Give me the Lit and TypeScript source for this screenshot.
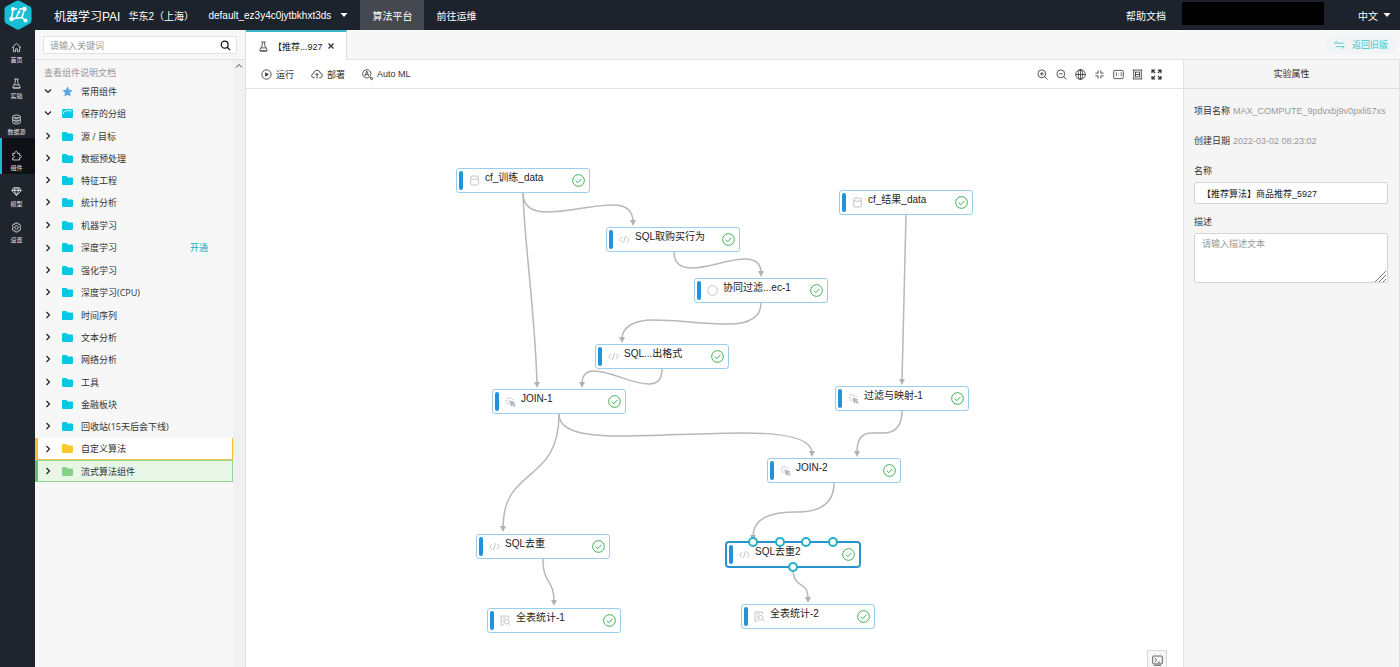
import { LitElement, html, svg, css, nothing } from "lit";
import { customElement, property, state } from "lit/decorators.js";
import { classMap } from "lit/directives/class-map.js";
import { styleMap } from "lit/directives/style-map.js";

/* Icon shapes, each drawn on a 16 x 16 grid with the current colour. */
const ICONS: Record<string, unknown> = {
  home: svg`<path d="M1.5 8.2 8 2l6.500 6.200M3.500 7v7h3.200v-4h2.600v4h3.200V7"/>`,
  flask: svg`<path d="M5 1.500h6M6.200 1.500v5L2.800 12.500q-.8 2 1.200 2h8q2 0 1.200-2L9.800 6.500v-5M4.500 10h7M3 14.500h10"/>`,
  data: svg`<ellipse cx="8" cy="3.500" rx="5.500" ry="2"/><path d="M2.500 3.500v9c0 2.600 11 2.600 11 0v-9M2.500 8c0 2.400 11 2.400 11 0M5 7h6M5 11.500h6"/>`,
  puzzle: svg`<path d="M2.500 5h3.200C5 1 10 1 9.300 5h3.200v3c3.600-.8 3.600 4 0 3.300v3.200h-10v-3.200c3 .5 3-4 0-3.300z"/>`,
  diamond: svg`<path d="M4 2.500h8l3 4-7 7.500-7-7.500zM1 6.500h14M5 6.500l3 7 3-7M4 2.500l1 4 3-4 3 4 1-4"/>`,
  gear: svg`<path d="M6.300 1.500h3.400l.6 1.800 1.900-.4 1.900 2.900-1 1.500v1.400l1 1.500-1.900 2.900-1.900-.4-.6 1.800H6.300l-.6-1.800-1.900.4-1.900-2.900 1-1.500V7.300l-1-1.500 1.900-2.900 1.900.4z"/><circle cx="8" cy="8" r="2.500"/>`,
  search: svg`<circle cx="6.800" cy="6.800" r="5"/><path d="m10.500 10.500 4.300 4.300"/>`,
  play: svg`<circle cx="8" cy="8" r="6.800"/><path d="M6 4.800v6.400L11.500 8z" fill="currentColor" stroke="none"/>`,
  cloud: svg`<path d="M5 13H4C0 13 0 7.500 3.700 7.300 4 1.800 11.500 1.800 12 6.500c4 .2 4 6.500 0 6.500h-1M8 14V7.500M5.800 9.500 8 7.300l2.200 2.200"/>`,
  automl: svg`<circle cx="7" cy="7" r="6"/><path d="M4 10.500 7 3l3 7.500M5.200 8.200h3.600M11.500 11.500l1.500 1.500"/><circle cx="14" cy="14" r="1.500"/>`,
  zoomin: svg`<circle cx="7" cy="7" r="5.700"/><path d="m11.200 11.200 4 4M4.200 7h5.600M7 4.200v5.600"/>`,
  zoomout: svg`<circle cx="7" cy="7" r="5.700"/><path d="m11.200 11.200 4 4M4.200 7h5.600"/>`,
  globe: svg`<circle cx="8" cy="8" r="7"/><ellipse cx="8" cy="8" rx="3.200" ry="7"/><path d="M1 8h14M8 1v14"/>`,
  shrink: svg`<path d="M6 2v4H2M10 2v4h4M6 14v-4H2M10 14v-4h4"/>`,
  ratio: svg`<rect x="1" y="2" width="14" height="12" rx="1.500"/><path d="M4 5.500h1v5M8 6.500v.800M8 9.200v.800M11 5.500h1v5" stroke-width="1"/>`,
  fit: svg`<path d="M1 1.500h14M1 14.500h14M2.500 1.500v13M13.500 1.500v13"/><rect x="5" y="4.500" width="6" height="7"/><path d="M5 8h6"/>`,
  full: svg`<path d="M1.500 6V1.500H6M1.500 1.500 6 6M10 1.500h4.500V6M14.500 1.500 10 6M1.500 10v4.500H6M1.500 14.500 6 10M10 14.500h4.500V10M14.500 14.500 10 10" stroke-width="1.800"/>`,
  swap: svg`<path d="M1 6h13M1 6l3-3M3 11h12l-3 3"/>`,
  right: svg`<path d="m5 2 6 6-6 6"/>`,
  down: svg`<path d="m2 5 6 6 6-6"/>`,
  up: svg`<path d="m2 11 6-6 6 6"/>`,
  close: svg`<path d="m3 3 10 10M13 3 3 13"/>`,
  caret: svg`<path d="M1 4h14l-7 8z" fill="currentColor" stroke="none"/>`,
  star: svg`<path d="m8 .5 2.300 4.900 5.200.7-3.800 3.700.9 5.400L8 12.600l-4.600 2.600.9-5.400L.5 6.100l5.200-.7z" fill="currentColor" stroke="none"/>`,
  folder: svg`<path d="M0 3.200q0-1.700 1.700-1.700h4.800l1.800 2h6q1.700 0 1.700 1.700v7.600q0 1.700-1.700 1.700H1.700Q0 14.500 0 12.800z" fill="currentColor" stroke="none"/>`,
  opened: svg`<path d="M0 3.200q0-1.700 1.700-1.700h12.600q1.700 0 1.700 1.700v9.600q0 1.700-1.700 1.700H1.700Q0 14.500 0 12.800z" fill="currentColor" stroke="none"/><path d="M2 9V5.500h2.500l1-1.500H14" stroke="#fff" stroke-width="1.200"/>`,
  table: svg`<path d="M2.500 3.500q0-2 2-2h7q2 0 2 2v9q0 2-2 2h-7q-2 0-2-2zM2.500 4.500q1.500 1.800 5.500 1.800t5.500-1.800"/>`,
  code: svg`<path d="M4.500 4 1 8l3.500 4M11.500 4 15 8l-3.500 4M9.500 3l-3 10"/>`,
  circle: svg`<circle cx="8" cy="8" r="7"/>`,
  spark: svg`<path d="M6 1v3M2.500 2.500l1.800 2M9.800 2.500 8.500 4.300M1 6.500h2.500M2 10.500l2-1.500M5.500 12v-2.500M11 5h2"/><path d="m7 7 7.500 2.800-2.500 1.400 3 3-1.300 1.300-3-3L9.300 15z" fill="currentColor"/>`,
  report: svg`<path d="M6 14.500H1.500v-13h11V5M4 4.500h5M4 7.500h2M4 10.500h1.500"/><circle cx="9.800" cy="9.800" r="3.300"/><path d="m12.300 12.300 3 3"/>`,
  check: svg`<circle cx="8" cy="8" r="7.200"/><path d="m4.600 8.200 2.500 2.500 4.500-4.700"/>`,
  terminal: svg`<rect x="1" y="1.500" width="14" height="11.500" rx="1"/><path d="m4 4.500 3 2.800-3 2.800M8.500 10.500H12M3 15h10"/>`,
};

const icon = (name: string, kind = "") =>
  html`<svg class="icon ${kind}" viewBox="0 0 16 16" aria-hidden="true">${ICONS[name]}</svg>`;

const iconStyles = css`
  .icon {
    display: block;
    flex: none;
    width: 11px;
    height: 11px;
    fill: none;
    stroke: currentColor;
    stroke-width: 1.2;
    overflow: visible;
  }
  .small { width: 8px; height: 8px; }
`;

interface TreeItem {
  label: string;
  icon?: string;
  open?: boolean;
  action?: string;
  tone?: string;
}

const TREE: TreeItem[][] = [
  [
    { label: "常用组件", icon: "star", open: true, tone: "favourite" },
    { label: "保存的分组", icon: "opened", open: true },
  ],
  [{ label: "源 / 目标" }, { label: "数据预处理" }, { label: "特征工程" }, { label: "统计分析" }],
  [
    { label: "机器学习" },
    { label: "深度学习", action: "开通" },
    { label: "强化学习" },
    { label: "深度学习(CPU)" },
  ],
  [{ label: "时间序列" }, { label: "文本分析" }, { label: "网络分析" }],
  [{ label: "工具" }, { label: "金融板块" }, { label: "回收站(15天后会下线)" }],
  [
    { label: "自定义算法", tone: "custom" },
    { label: "流式算法组件", tone: "stream" },
  ],
];

@customElement("component-tree")
class ComponentTree extends LitElement {
  static styles = [
    iconStyles,
    css`
      :host { display: flex; flex-direction: column; box-sizing: border-box; background: #f7f7f7; border-right: 1px solid #e0e0e0; }
      .search { display: flex; align-items: center; height: 18px; box-sizing: border-box; margin: 6px 8px 5px; border: 1px solid #e2e2e2; background: #fff; }
      .search input { flex: 1; min-width: 0; border: 0; outline: 0; padding: 0 6px; background: none; font: inherit; color: #333; }
      .search input::placeholder { color: #9a9a9a; opacity: 1; }
      .search button { display: flex; border: 0; padding: 0 5px; background: none; color: #111; }
      .search .icon { stroke-width: 1.8; }
      .body { flex: 1; display: flex; border-top: 1px solid #e2e2e2; }
      .list { flex: 1; min-width: 0; padding-top: 6px; }
      .doc { display: block; padding-left: 9px; line-height: 14px; color: #999; text-decoration: none; }
      .groups { display: flex; flex-direction: column; gap: 1px; }
      ul { list-style: none; margin: 0; padding: 0; }
      .row { display: flex; align-items: center; height: 22px; box-sizing: border-box; padding: 0 25px 0 9px; color: #333; }
      .row.extra { height: 23px; }
      .toggle { display: flex; align-items: center; flex: 1; border: 0; padding: 0; background: none; font: inherit; color: inherit; text-align: left; white-space: nowrap; }
      .toggle .small { color: #222; stroke-width: 2.4; margin-right: 10px; }
      .glyph { color: #06c8e4; margin-right: 8px; }
      .favourite .glyph { color: #58a9e6; }
      .custom { padding-left: 6px; border-left: 3px solid #f8c12c; border-right: 1px solid #f8c12c; border-bottom: 1px solid #f0c850; background: #fff; }
      .custom .glyph { color: #fbc62e; }
      .stream { padding-left: 6px; border: 1px solid #8fd48f; border-left: 3px solid #62c46a; background: #e8f6e6; }
      .stream .glyph { color: #85d287; }
      .more { color: #14b0c4; text-decoration: none; }
      .track { width: 12px; background: #f0f0f0; color: #444; }
      .track .icon { margin: 2px auto; stroke-width: 2; }
    `,
  ];

  @state() private keyword = "";

  private row(item: TreeItem) {
    const tone = item.tone ?? "";
    return html`<li class="row ${tone} ${item.action ? "extra" : ""}">
      <button class="toggle" aria-expanded=${item.open ? "true" : "false"}>
        ${icon(item.open ? "down" : "right", "small")} ${icon(item.icon ?? "folder", "glyph")}
        <span>${item.label}</span>
      </button>
      ${item.action ? html`<a class="more" href="#">${item.action}</a>` : nothing}
    </li>`;
  }

  render() {
    return html`
      <form class="search" role="search">
        <input type="text" aria-label="搜索组件" placeholder="请输入关键词" .value=${this.keyword}
          @input=${(e: Event) => (this.keyword = (e.target as HTMLInputElement).value)} />
        <button type="button" aria-label="搜索">${icon("search")}</button>
      </form>
      <div class="body">
        <div class="list">
          <a class="doc" href="#">查看组件说明文档</a>
          <div class="groups">
            ${TREE.map((group) => html`<ul>${group.map((item) => this.row(item))}</ul>`)}
          </div>
        </div>
        <div class="track">${icon("up", "small")}</div>
      </div>
    `;
  }
}

interface FlowNode {
  x: number;
  y: number;
  label: string;
  icon: string;
  selected?: boolean;
}

/* The graph keeps workspace coordinates; PAN is the workspace point at the canvas corner. */
const PAN = { x: 246, y: 89 };

const NODES: FlowNode[] = [
  { x: 456, y: 168, label: "cf_训练_data", icon: "table" },
  { x: 606, y: 227, label: "SQL取购买行为", icon: "code" },
  { x: 694, y: 278, label: "协同过滤...ec-1", icon: "circle" },
  { x: 595, y: 344, label: "SQL...出格式", icon: "code" },
  { x: 492, y: 389, label: "JOIN-1", icon: "spark" },
  { x: 839, y: 190, label: "cf_结果_data", icon: "table" },
  { x: 835, y: 386, label: "过滤与映射-1", icon: "spark" },
  { x: 767, y: 458, label: "JOIN-2", icon: "spark" },
  { x: 476, y: 534, label: "SQL去重", icon: "code" },
  { x: 487, y: 608, label: "全表统计-1", icon: "report" },
  { x: 726, y: 542, label: "SQL去重2", icon: "code", selected: true },
  { x: 741, y: 604, label: "全表统计-2", icon: "report" },
];

const EDGES: string[] = [
  "M523 193C523 207 532 212 547 212C570 212 590 205 613 205C626 205 633 210 633 222",
  "M523 193C524 240 535 310 537 384",
  "M674 252C674 263 681 268 692 268C710 268 727 259 745 259C756 259 761 264 761 273",
  "M761 303C761 317 749 324 728 324C700 324 680 320 653 320C634 320 622 327 622 339",
  "M662 369C662 380 657 384 649 384C632 384 610 371 594 371C586 371 582 376 582 384",
  "M559 414C559 430 580 436 620 436C660 436 700 433 745 433C790 433 812 440 812 453",
  "M559 414C559 485 503 465 503 528",
  "M906 215L902 381",
  "M902 411C902 427 895 433 883 433H872C860 433 857 441 857 453",
  "M834 483C834 503 820 512 797 512C770 512 753 518 753 537",
  "M543 559C543 585 554 578 554 602",
  "M793 567C793 592 808 578 808 599",
];

@customElement("flow-canvas")
class FlowCanvas extends LitElement {
  static styles = [
    iconStyles,
    css`
      :host { display: block; position: relative; overflow: hidden; background: #fff; font-size: 10px; }
      .edges { position: absolute; inset: 0; width: 100%; height: 100%; }
      .edge { fill: none; stroke: #b6b8ba; stroke-width: 1.5; }
      .head { fill: #b0b2b4; }
      .node { position: absolute; display: flex; align-items: center; width: 134px; height: 25px; box-sizing: border-box; padding: 0 4px 0 2px; border: 1px solid #9acdee; border-radius: 3px; background: #fff; color: #222; }
      .node.selected { border-color: #2a93cc; box-shadow: 0 0 0 1px #2a93cc; }
      .bar { width: 4px; height: 19px; border-radius: 2px; background: #2393d9; margin-right: 6px; }
      .type { color: #b4b7bb; margin-right: 5px; }
      .label { flex: 1; align-self: flex-start; line-height: 17px; white-space: nowrap; }
      .done { width: 13px; height: 13px; color: #36b04a; }
      .ports { position: absolute; left: 0; right: 0; display: flex; justify-content: space-between; padding: 0 21px; }
      .in { top: -6px; }
      .out { bottom: -6px; justify-content: center; }
      .port { width: 10px; height: 10px; box-sizing: border-box; border: 2px solid #20b0cc; border-radius: 50%; background: #fff; }
      .console { position: absolute; right: 16px; bottom: -3px; display: flex; justify-content: center; align-items: center; width: 20px; height: 20px; padding: 0; border: 1px solid #d8d8d8; background: #f6f6f6; color: #444; }
    `,
  ];

  private node(n: FlowNode) {
    return html`<div class=${classMap({ node: true, selected: !!n.selected })}
      style=${styleMap({ left: `${n.x - PAN.x}px`, top: `${n.y - PAN.y}px` })}>
      <span class="bar"></span>
      ${icon(n.icon, "type")}
      <span class="label">${n.label}</span>
      ${icon("check", "done")}
      ${n.selected
        ? html`<span class="ports in">${[0, 1, 2, 3].map(() => html`<i class="port"></i>`)}</span>
            <span class="ports out"><i class="port"></i></span>`
        : nothing}
    </div>`;
  }

  render() {
    return html`
      <svg class="edges" aria-hidden="true">
        <defs>
          <marker id="head" markerUnits="userSpaceOnUse" markerWidth="8" markerHeight="8" refX="2" refY="3" orient="90">
            <path class="head" d="M0 0L6 3L0 6z" />
          </marker>
        </defs>
        <g transform="translate(${-PAN.x} ${-PAN.y})">
          ${EDGES.map((d) => svg`<path class="edge" d=${d} marker-end="url(#head)"/>`)}
        </g>
      </svg>
      ${NODES.map((n) => this.node(n))}
      <button class="console" aria-label="日志">${icon("terminal")}</button>
    `;
  }
}

@customElement("property-panel")
class PropertyPanel extends LitElement {
  static styles = css`
    :host { display: block; box-sizing: border-box; background: #f5f5f5; border-left: 1px solid #e2e2e2; border-right: 1px solid #e2e2e2; color: #333; }
    h2 { box-sizing: border-box; margin: 0; height: 29px; border-bottom: 1px solid #ddd; font: inherit; line-height: 28px; text-align: center; }
    .fields { padding: 15px 11px 0 10px; }
    dl { margin: 0; }
    .pair { display: flex; gap: 3px; line-height: 14px; margin-bottom: 16px; white-space: nowrap; }
    dd { margin: 0; color: #999; }
    label { display: block; line-height: 14px; margin-bottom: 4px; }
    input, textarea { display: block; width: 100%; box-sizing: border-box; margin: 0; border: 1px solid #d4d4d4; border-radius: 2px; background: #fff; font: inherit; color: #222; outline: 0; }
    input { height: 22px; padding: 0 7px; margin-bottom: 11px; }
    textarea { height: 50px; padding: 3px 7px; line-height: 14px; resize: none; }
    textarea::placeholder { color: #999; opacity: 1; }
    .area { position: relative; }
    .grip { position: absolute; right: 2px; bottom: 1px; width: 11px; height: 11px; fill: none; stroke: #777; }
  `;

  @property() name = "【推荐算法】商品推荐_5927";

  render() {
    return html`
      <h2>实验属性</h2>
      <div class="fields">
        <dl>
          <div class="pair"><dt>项目名称</dt><dd>MAX_COMPUTE_9pdvxbj9v0pxli57xs</dd></div>
          <div class="pair"><dt>创建日期</dt><dd>2022-03-02 08:23:02</dd></div>
        </dl>
        <label for="name">名称</label>
        <input id="name" type="text" .value=${this.name} />
        <label for="note">描述</label>
        <div class="area">
          <textarea id="note" placeholder="请输入描述文本"></textarea>
          <svg class="grip" viewBox="0 0 11 11" aria-hidden="true"><path d="M0 11 11 0M4 11l7-7M8 11l3-3" /></svg>
        </div>
      </div>
    `;
  }
}

const RAIL = [
  { label: "首页", icon: "home" },
  { label: "实验", icon: "flask" },
  { label: "数据源", icon: "data" },
  { label: "组件", icon: "puzzle" },
  { label: "模型", icon: "diamond" },
  { label: "设置", icon: "gear" },
];

const VIEW_TOOLS = [
  ["zoomin", "放大"],
  ["zoomout", "缩小"],
  ["globe", "全局"],
  ["shrink", "收缩"],
  ["ratio", "实际大小"],
  ["fit", "适应画布"],
  ["full", "全屏"],
];

@customElement("app-root")
class AppRoot extends LitElement {
  static styles = [
    iconStyles,
    css`
      :host { display: flex; flex-direction: column; height: 100vh; overflow: hidden; background: #fff; font-family: "Liberation Sans", "Noto Sans CJK SC", sans-serif; font-size: 9px; color: #333; }
      button { font: inherit; color: inherit; border: 0; padding: 0; background: none; }
      .top { flex: none; display: flex; align-items: center; height: 30px; background: #1d232c; color: #fff; font-size: 10px; white-space: nowrap; }
      .logo { width: 28px; height: 30px; margin: 0 22px 0 4px; }
      h1 { margin: 0 8px 0 0; font-size: 12px; font-weight: 400; }
      .region { width: 80px; }
      .picker { display: flex; align-items: center; gap: 5px; }
      .project { justify-content: space-between; width: 140px; margin-right: 12px; }
      .nav { display: flex; align-self: stretch; }
      .nav a { display: flex; align-items: center; padding: 0 12px; color: inherit; text-decoration: none; }
      .nav .current { background: #45494f; }
      .right { display: flex; align-items: center; gap: 16px; margin-left: auto; padding-right: 9px; }
      .right a { color: inherit; text-decoration: none; }
      .account { width: 142px; height: 23px; margin-right: 18px; margin-bottom: 3px; background: #000; }
      .work { flex: 1; min-height: 0; display: flex; }
      .rail { flex: none; width: 35px; background: #20242d; color: #e4e6e8; }
      .rail a { display: flex; flex-direction: column; align-items: center; box-sizing: border-box; height: 36px; padding: 12px 2px 0 0; color: inherit; text-decoration: none; font-size: 6px; line-height: 10px; gap: 2px; }
      .rail .current { padding-right: 4px; border-left: 2px solid #20b8cc; background: #0f1117; }
      component-tree { flex: none; width: 211px; font-family: "Open Sans", "Noto Sans CJK SC", sans-serif; }
      .main { flex: 1; min-width: 0; display: flex; flex-direction: column; }
      .tabs { display: flex; align-items: stretch; height: 30px; box-sizing: border-box; background: #f7f7f7; border-bottom: 1px solid #e0e0e0; }
      .tab { display: flex; align-items: center; gap: 4px; width: 101px; box-sizing: border-box; margin-bottom: -1px; padding-left: 12px; border-top: 2px solid #35b6c6; border-right: 1px solid #ddd; background: #fff; color: #222; }
      .tab .close { display: flex; color: #111; }
      .tab .small { stroke-width: 2.6; }
      .tab .icon { color: #333; }
      .back { display: flex; align-items: center; gap: 7px; align-self: center; height: 18px; margin: 0 3px 0 auto; padding: 0 9px 0 8px; border-radius: 9px; background: #f0f4f4; color: #3fc4cc; text-decoration: none; }
      .content { flex: 1; min-height: 0; display: flex; }
      .editor { flex: 1; min-width: 0; display: flex; flex-direction: column; }
      .tools { display: flex; align-items: center; height: 29px; box-sizing: border-box; padding: 0 21px 0 15px; border-bottom: 1px solid #e2e2e2; gap: 17px; }
      .tools button { display: flex; align-items: center; gap: 4px; white-space: nowrap; }
      .view { display: flex; gap: 8px; margin-left: auto; }
      .tools .wide { width: 12px; height: 12px; }
      flow-canvas { flex: 1; }
      property-panel { flex: none; width: 217px; }
    `,
  ];

  @state() private section = "组件";

  private header() {
    return html`<header class="top">
      <svg class="logo" viewBox="0 0 28 30" aria-hidden="true">
        <path fill="#16bdd4" d="M12 1q2-1 4 0l9.500 5.200Q27.500 7.300 27.500 9.500v11q0 2.200-2 3.300L16 29q-2 1-4 0l-9.500-5.200Q.5 22.700.5 20.500v-11Q.5 7.300 2.500 6.200z" />
        <g fill="none" stroke="#fff" stroke-width="1.600">
          <path d="M13 9H8.500v4.500M8.500 13.500 7 19l11-1.500L22 21M12 18l3-6.500M15 9h5.500L18 17.500" />
        </g>
        <g fill="#fff">
          <circle cx="9" cy="9" r="2" /><circle cx="20.500" cy="9" r="2.200" />
          <circle cx="7.500" cy="19" r="2.200" /><circle cx="21.500" cy="20.500" r="2" /><circle cx="15" cy="12" r="1.400" />
        </g>
      </svg>
      <h1>机器学习PAI</h1>
      <span class="region">华东2（上海）</span>
      <button class="picker project">default_ez3y4c0jytbkhxt3ds ${icon("caret", "small")}</button>
      <nav class="nav">
        <a class="current" href="#">算法平台</a>
        <a href="#">前往运维</a>
      </nav>
      <div class="right">
        <a href="#">帮助文档</a>
        <span class="account"></span>
        <button class="picker">中文 ${icon("caret", "small")}</button>
      </div>
    </header>`;
  }

  render() {
    return html`
      ${this.header()}
      <div class="work">
        <nav class="rail">
          ${RAIL.map(
            (r) => html`<a href="#" class=${classMap({ current: r.label === this.section })}
              @click=${() => (this.section = r.label)}>${icon(r.icon)}<span>${r.label}</span></a>`
          )}
        </nav>
        <component-tree></component-tree>
        <main class="main">
          <div class="tabs">
            <div class="tab">
              ${icon("flask")}<span>【推荐...927</span>
              <button class="close" aria-label="关闭">${icon("close", "small")}</button>
            </div>
            <a class="back" href="#">${icon("swap")}返回旧版</a>
          </div>
          <div class="content">
            <section class="editor">
              <div class="tools">
                <button>${icon("play")}运行</button>
                <button>${icon("cloud", "wide")}部署</button>
                <button>${icon("automl")}Auto ML</button>
                <div class="view">
                  ${VIEW_TOOLS.map(([name, title]) => html`<button aria-label=${title}>${icon(name)}</button>`)}
                </div>
              </div>
              <flow-canvas></flow-canvas>
            </section>
            <property-panel></property-panel>
          </div>
        </main>
      </div>
    `;
  }
}
